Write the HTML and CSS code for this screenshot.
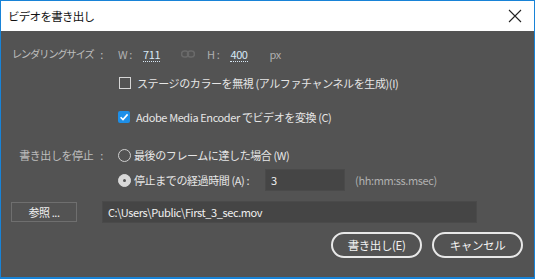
FILE: index.html
```html
<!DOCTYPE html>
<html lang="ja">
<head>
  <meta charset="UTF-8" />
  <title>ビデオを書き出し</title>
  <link rel="stylesheet" href="styles.css">
</head>
<body>
  <div class="window">
    <!-- Title bar -->
    <div class="titlebar">
      <span class="title">ビデオを書き出し</span>
      <svg class="close" width="14" height="14" viewBox="0 0 14 14">
        <path d="M1 1 L13 13 M13 1 L1 13" stroke="#222" stroke-width="1.1" fill="none"/>
      </svg>
    </div>

    <div class="content">
      <!-- Rendering size -->
      <div class="row row-size">
        <span class="label"><span class="kana">レンダリングサイズ</span><span class="colon">:</span></span>
        <span class="dim w-label">W :</span>
        <span class="value w">711</span>
        <svg class="link" width="14" height="8" viewBox="0 0 14 8">
          <rect x="0.5" y="1" width="7" height="6" rx="3" fill="none" stroke="#6a6a6a" stroke-width="1.6"/>
          <rect x="6.5" y="1" width="7" height="6" rx="3" fill="none" stroke="#6a6a6a" stroke-width="1.6"/>
        </svg>
        <span class="dim">H :</span>
        <span class="value h">400</span>
        <span class="dim px">px</span>
      </div>

      <div class="row row-alpha">
        <span class="label"></span>
        <span class="check"></span>
        <span class="text">ステージのカラーを無視 (アルファチャンネルを生成)(I)</span>
      </div>

      <div class="row row-ame">
        <span class="label"></span>
        <span class="check checked">
          <svg width="12" height="12" viewBox="0 0 12 12">
            <path d="M2.6 6.2 L5 8.6 L9.6 3.4" stroke="#fff" stroke-width="1.6" fill="none"/>
          </svg>
        </span>
        <span class="text">Adobe Media Encoder でビデオを変換 (C)</span>
      </div>

      <!-- Stop export -->
      <div class="row row-stop1">
        <span class="label"><span>書き出しを停止</span><span class="colon">:</span></span>
        <span class="radio"></span>
        <span class="text">最後のフレームに達した場合 (W)</span>
      </div>

      <div class="row row-stop2">
        <span class="label"></span>
        <span class="radio on"></span>
        <span class="text">停止までの経過時間 (A) :</span>
        <span class="field time">3</span>
        <span class="dim hint">(hh:mm:ss.msec)</span>
      </div>

      <!-- Output path -->
      <div class="row row-path">
        <span class="browse">参照 ...</span>
        <span class="field path">C:\Users\Public\First_3_sec.mov</span>
      </div>

      <div class="row row-actions">
        <span class="pill">書き出し(E)</span>
        <span class="pill">キャンセル</span>
      </div>
    </div>
  </div>
</body>
</html>
```

FILE: styles.css
```css
/* Dialog frame */
body {
  margin: 0;
  padding: 0;
  background: #535353;
  font-family: "Noto Sans CJK JP", "Noto Sans", sans-serif;
  font-size: 11px;
}
.window {
  width: 535px;
  height: 279px;
  box-sizing: border-box;
  border: 1px solid #1883d7;
  border-bottom-width: 2px;
  background: #535353;
  display: flex;
  flex-direction: column;
}
.titlebar {
  height: 30px;
  background: #fff;
  display: flex;
  align-items: center;
  justify-content: space-between;
  padding: 0 12px 0 7px;
  color: #111;
  font-size: 11.5px;
  letter-spacing: -0.7px;
}
.close {
  display: block;
}

/* Rows */
.content {
  display: flex;
  flex-direction: column;
  color: #e6e6e6;
  letter-spacing: -0.4px;
}
.row {
  display: flex;
  align-items: center;
  height: 20px;
  white-space: nowrap;
}
.label {
  width: 104px;
  box-sizing: border-box;
  padding-right: 2px;
  display: flex;
  justify-content: flex-end;
  color: #bdbdbd;
  flex: none;
}
.kana {
  font-size: 10.5px;
  letter-spacing: -1.4px;
}
.colon {
  margin-left: 7px;
}
.row-size { margin-top: 13px; }
.row-alpha { margin-top: 9px; }
.row-ame { margin-top: 14px; }
.row-stop1 { margin-top: 18px; }
.row-stop2 { margin-top: 4px; height: 22px; }
.row-path { margin-top: 10px; height: 22px; }
.row-actions { margin-top: 9px; height: 26px; justify-content: flex-end; padding-right: 11px; gap: 10px; }

.dim {
  color: #b0b0b0;
}
.w-label {
  margin-left: 13px;
}
.value {
  color: #d7e8f6;
  border-bottom: 1px dotted #d7e8f6;
  line-height: 14px;
  margin-left: 11px;
}
.link {
  margin: 0 12px 0 21px;
}
.value.h {
  margin-left: 11px;
}
.px {
  margin-left: 22px;
}

/* Checkboxes and radios */
.check {
  width: 12px;
  height: 12px;
  box-sizing: border-box;
  border: 1px solid #d6d6d6;
  margin: 0 6px 0 14px;
  flex: none;
}
.check.checked {
  border: none;
  background: #1d8fe8;
  border-radius: 2px;
  margin-left: 13px;
}
.check svg {
  display: block;
}
.radio {
  width: 13px;
  height: 13px;
  box-sizing: border-box;
  border: 1px solid #cfcfcf;
  border-radius: 50%;
  margin: 0 3px 0 13px;
  flex: none;
}
.radio.on {
  background: #d9d9d9;
  border-color: #d9d9d9;
  position: relative;
}
.radio.on::after {
  content: "";
  position: absolute;
  left: 4px;
  top: 4px;
  width: 3px;
  height: 3px;
  border-radius: 50%;
  background: #555;
}

/* Inputs */
.field {
  height: 22px;
  box-sizing: border-box;
  background: #454545;
  border: 1px solid #4a4a4a;
  color: #f0f0f0;
  display: flex;
  align-items: center;
  padding-left: 5px;
}
.time {
  width: 80px;
  margin-left: 16px;
}
.hint {
  margin-left: 10px;
}
.path {
  width: 375px;
  margin-left: 25px;
}
.browse {
  width: 66px;
  height: 20px;
  box-sizing: border-box;
  border: 1px solid #6f6f6f;
  margin-left: 10px;
  text-align: center;
  line-height: 18px;
  color: #f0f0f0;
}

/* Dialog buttons */
.pill {
  width: 91px;
  height: 26px;
  box-sizing: border-box;
  border: 2px solid #e8e8e8;
  border-radius: 13px;
  display: flex;
  align-items: center;
  justify-content: center;
  color: #f2f2f2;
  font-size: 11.5px;
}
```
